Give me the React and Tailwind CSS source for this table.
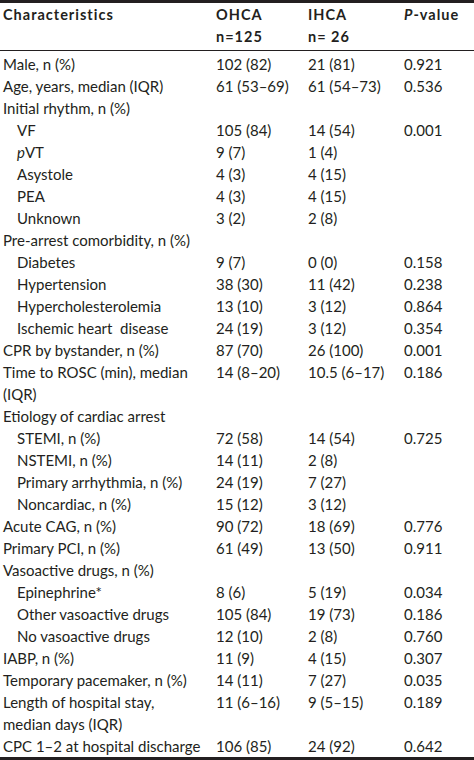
import React from "react";

const rows = [
  ["Male, n (%)", "102 (82)", "21 (81)", "0.921", 0],
  ["Age, years, median (IQR)", "61 (53–69)", "61 (54–73)", "0.536", 0],
  ["Initial rhythm, n (%)", "", "", "", 0],
  ["VF", "105 (84)", "14 (54)", "0.001", 1],
  ["pVT", "9 (7)", "1 (4)", "", 1],
  ["Asystole", "4 (3)", "4 (15)", "", 1],
  ["PEA", "4 (3)", "4 (15)", "", 1],
  ["Unknown", "3 (2)", "2 (8)", "", 1],
  ["Pre-arrest comorbidity, n (%)", "", "", "", 0],
  ["Diabetes", "9 (7)", "0 (0)", "0.158", 1],
  ["Hypertension", "38 (30)", "11 (42)", "0.238", 1],
  ["Hypercholesterolemia", "13 (10)", "3 (12)", "0.864", 1],
  ["Ischemic heart\u00a0 disease", "24 (19)", "3 (12)", "0.354", 1],
  ["CPR by bystander, n (%)", "87 (70)", "26 (100)", "0.001", 0],
  ["Time to ROSC (min), median", "14 (8–20)", "10.5 (6–17)", "0.186", 0],
  ["(IQR)", "", "", "", 0],
  ["Etiology of cardiac arrest", "", "", "", 0],
  ["STEMI, n (%)", "72 (58)", "14 (54)", "0.725", 1],
  ["NSTEMI, n (%)", "14 (11)", "2 (8)", "", 1],
  ["Primary arrhythmia, n (%)", "24 (19)", "7 (27)", "", 1],
  ["Noncardiac, n (%)", "15 (12)", "3 (12)", "", 1],
  ["Acute CAG, n (%)", "90 (72)", "18 (69)", "0.776", 0],
  ["Primary PCI, n (%)", "61 (49)", "13 (50)", "0.911", 0],
  ["Vasoactive drugs, n (%)", "", "", "", 0],
  ["Epinephrine*", "8 (6)", "5 (19)", "0.034", 1],
  ["Other vasoactive drugs", "105 (84)", "19 (73)", "0.186", 1],
  ["No vasoactive drugs", "12 (10)", "2 (8)", "0.760", 1],
  ["IABP, n (%)", "11 (9)", "4 (15)", "0.307", 0],
  ["Temporary pacemaker, n (%)", "14 (11)", "7 (27)", "0.035", 0],
  ["Length of hospital stay,", "11 (6–16)", "9 (5–15)", "0.189", 0],
  ["median days (IQR)", "", "", "", 0],
  ["CPC 1–2 at hospital discharge", "106 (85)", "24 (92)", "0.642", 0],
];

function Label({ text }) {
  if (text === "pVT") {
    return (
      <>
        <span className="italic">p</span>VT
      </>
    );
  }
  return text;
}

export default function App() {
  return (
    <div
      className="w-[474px] h-[760px] bg-white text-[#231f20] text-[15px] leading-[22px]"
      style={{ fontFamily: "Lato, 'Open Sans', sans-serif" }}
    >
      <div className="border-t-[3px] border-[#231f20]">
        <div className="grid grid-cols-[216px_92px_96px_1fr] pt-[1px] pb-[2px] text-[14.5px] font-bold tracking-[1px] border-b border-[#231f20]">
          <div className="pl-[3px]">Characteristics</div>
          <div>
            OHCA
            <br />
            n=125
          </div>
          <div>
            IHCA
            <br />
            n= 26
          </div>
          <div>
            <span className="italic">P</span>-value
          </div>
        </div>
        <div className="pt-[2px] border-b-[3px] border-[#231f20]">
          {rows.map(([label, a, b, p, indent], i) => (
            <div key={i} className="grid grid-cols-[216px_92px_96px_1fr] h-[22px] whitespace-nowrap">
              <div className={indent ? "pl-[17px]" : "pl-[3px]"}>
                <Label text={label} />
              </div>
              <div>{a}</div>
              <div>{b}</div>
              <div>{p}</div>
            </div>
          ))}
        </div>
      </div>
    </div>
  );
}
